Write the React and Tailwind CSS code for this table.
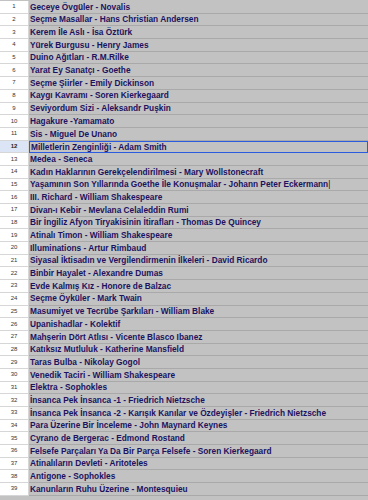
import React from "react";

const rows = [
  "Geceye Övgüler - Novalis",
  "Seçme Masallar - Hans Christian Andersen",
  "Kerem İle Aslı - İsa Öztürk",
  "Yürek Burgusu - Henry James",
  "Duino Ağıtları - R.M.Rilke",
  "Yarat Ey Sanatçı - Goethe",
  "Seçme Şiirler - Emily Dickinson",
  "Kaygı Kavramı - Soren Kierkegaard",
  "Seviyordum Sizi - Aleksandr Puşkin",
  "Hagakure -Yamamato",
  "Sis - Miguel De Unano",
  "Milletlerin Zenginliği - Adam Smith",
  "Medea - Seneca",
  "Kadın Haklarının Gerekçelendirilmesi - Mary Wollstonecraft",
  "Yaşamının Son Yıllarında Goethe İle Konuşmalar - Johann Peter Eckermann",
  "III. Richard - William Shakespeare",
  "Divan-ı Kebir - Mevlana Celaleddin Rumi",
  "Bir İngiliz Afyon Tiryakisinin İtirafları - Thomas De Quincey",
  "Atinalı Timon - William Shakespeare",
  "Illuminations - Artur Rimbaud",
  "Siyasal İktisadın ve Vergilendirmenin İlkeleri - David Ricardo",
  "Binbir Hayalet - Alexandre Dumas",
  "Evde Kalmış Kız - Honore de Balzac",
  "Seçme Öyküler - Mark Twain",
  "Masumiyet ve Tecrübe Şarkıları - William Blake",
  "Upanishadlar - Kolektif",
  "Mahşerin Dört Atlısı - Vicente Blasco Ibanez",
  "Katıksız Mutluluk - Katherine Mansfield",
  "Taras Bulba - Nikolay Gogol",
  "Venedik Taciri - William Shakespeare",
  "Elektra - Sophokles",
  "İnsanca Pek İnsanca -1 - Friedrich Nietzsche",
  "İnsanca Pek İnsanca -2 - Karışık Kanılar ve Özdeyişler - Friedrich Nietzsche",
  "Para Üzerine Bir İnceleme - John Maynard Keynes",
  "Cyrano de Bergerac - Edmond Rostand",
  "Felsefe Parçaları Ya Da Bir Parça Felsefe - Soren Kierkegaard",
  "Atinalıların Devleti - Aritoteles",
  "Antigone - Sophokles",
  "Kanunların Ruhu Üzerine - Montesquieu",
];

export default function App() {
  return (
    <div className="w-[368px] h-[500px] overflow-hidden bg-[#c2c2c2] pt-[1px]" style={{ fontFamily: '"Liberation Sans", Arial, sans-serif' }}>
      {rows.map((t, i) => {
        const sel = i === 11;
        return (
          <div key={i} className="flex h-[12.7px]">
            <div
              className={`w-[29px] shrink-0 flex items-center justify-center border-b border-r border-[#d6d6d6] text-[6px] ${sel ? "bg-[#dbe5f6] text-[#222] font-bold" : "bg-white text-[#333]"}`}
            >
              {i + 1}
            </div>
            <div
              className={`flex-1 min-w-0 flex items-center pl-[1px] whitespace-nowrap overflow-hidden text-[8.3px] font-bold text-[#1c1260] ${sel ? "border-[1.5px] border-[#2a5be0]" : "border-b border-[#a9a9a9]"}`}
            >
              {t}
              {i === 14 && <span className="font-normal text-[#111]">|</span>}
            </div>
          </div>
        );
      })}
    </div>
  );
}
